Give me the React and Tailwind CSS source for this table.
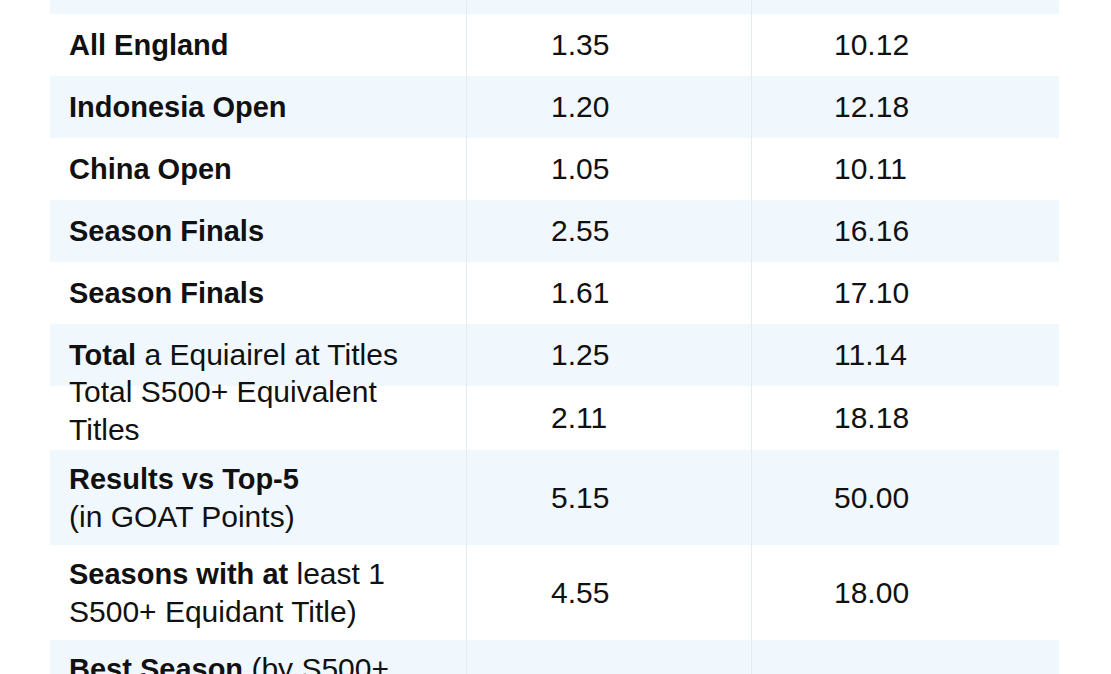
import React from "react";

const rows = [
  { h: "h-[62px]", blue: false, label: <b className="font-bold text-[29px]">All England</b>, a: "1.35", b: "10.12" },
  { h: "h-[62px]", blue: true, label: <b className="font-bold text-[29px]">Indonesia Open</b>, a: "1.20", b: "12.18" },
  { h: "h-[62px]", blue: false, label: <b className="font-bold text-[29px]">China Open</b>, a: "1.05", b: "10.11" },
  { h: "h-[62px]", blue: true, label: <b className="font-bold text-[29px]">Season Finals</b>, a: "2.55", b: "16.16" },
  { h: "h-[62px]", blue: false, label: <b className="font-bold text-[29px]">Season Finals</b>, a: "1.61", b: "17.10" },
  {
    h: "h-[62px]",
    blue: true,
    label: (
      <>
        <b className="font-bold text-[29px]">Total</b> a Equiairel at Titles
      </>
    ),
    a: "1.25",
    b: "11.14",
  },
  {
    h: "h-[64px]",
    blue: false,
    shift: true,
    label: (
      <>
        Total S500+ Equivalent
        <br />
        Titles
      </>
    ),
    a: "2.11",
    b: "18.18",
  },
  {
    h: "h-[95px]",
    blue: true,
    label: (
      <>
        <b className="font-bold text-[29px]">Results vs Top-5</b>
        <br />
        (in GOAT Points)
      </>
    ),
    a: "5.15",
    b: "50.00",
  },
  {
    h: "h-[95px]",
    blue: false,
    label: (
      <>
        <b className="font-bold text-[29px]">Seasons with at</b> least 1
        <br />
        S500+ Equidant Title)
      </>
    ),
    a: "4.55",
    b: "18.00",
  },
  {
    h: "h-[95px]",
    blue: true,
    label: (
      <>
        <b className="font-bold text-[29px]">Best Season</b> (by S500+
        <br />
        Equivalent Titles)
      </>
    ),
    a: "3.40",
    b: "14.00",
  },
];

function Row({ r }) {
  return (
    <div
      className={`grid grid-cols-[416px_285px_308px] grid-rows-1 ${r.h} ${
        r.blue ? "bg-[#f0f8fe]" : "bg-white"
      }`}
    >
      <div className="flex items-center pl-[19px] overflow-visible">
        <div className={`leading-[38px] whitespace-nowrap ${r.shift ? "mb-[14px]" : ""}`}>
          {r.label}
        </div>
      </div>
      <div className="flex items-center border-l border-[#e3ecf3] pl-[84px] leading-[38px]">
        {r.a}
      </div>
      <div className="flex items-center border-l border-[#e3ecf3] pl-[82px] leading-[38px]">
        {r.b}
      </div>
    </div>
  );
}

export default function App() {
  return (
    <div
      className="w-[1111px] h-[674px] overflow-hidden bg-white text-[30px] text-[#111111]"
      style={{ fontFamily: '"Liberation Sans", Arial, sans-serif' }}
    >
      <div className="ml-[50px] w-[1009px] -mt-[48px]">
        <div className="grid grid-cols-[416px_285px_308px] grid-rows-1 h-[62px] bg-[#f0f8fe]">
          <div className="flex items-start pl-[19px] font-bold text-[29px] leading-[38px]">
            Metric (by Type)
          </div>
          <div className="border-l border-[#e3ecf3]" />
          <div className="border-l border-[#e3ecf3]" />
        </div>
        {rows.map((r, i) => (
          <Row key={i} r={r} />
        ))}
      </div>
    </div>
  );
}
